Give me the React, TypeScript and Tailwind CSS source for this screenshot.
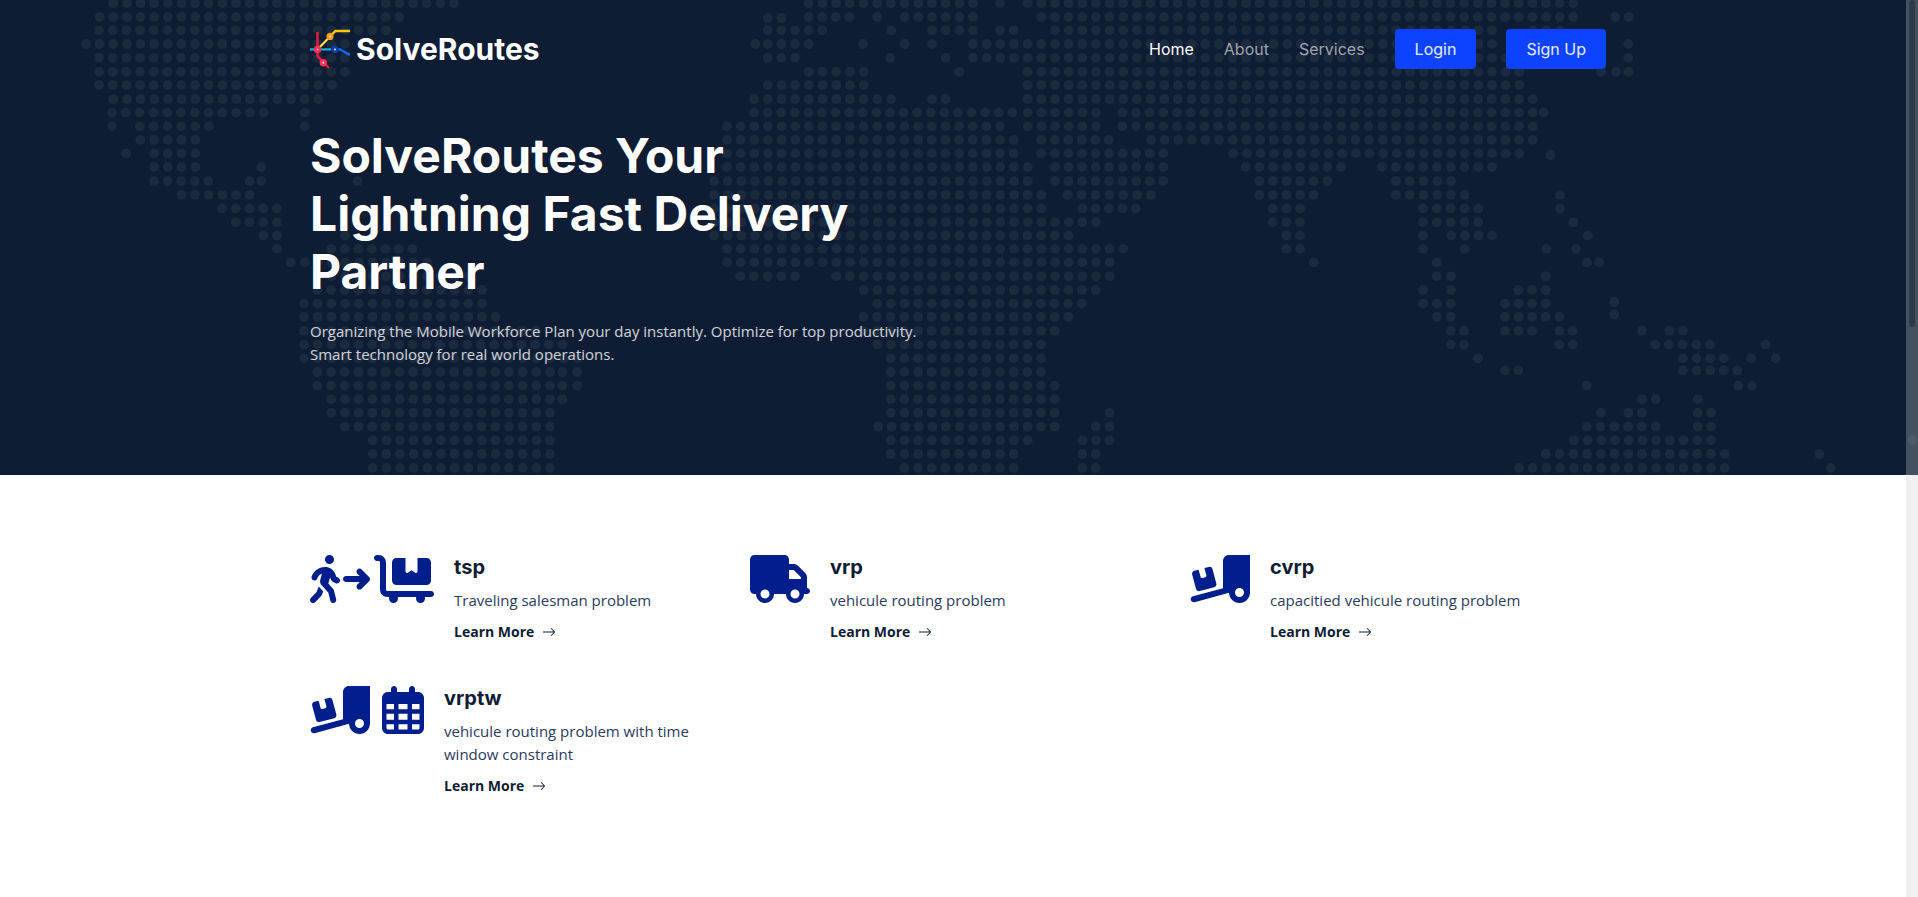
import type { ReactNode } from "react";
import {
  FaCartFlatbed,
  FaPersonWalkingArrowRight,
  FaTruck,
  FaTruckRampBox,
} from "react-icons/fa6";
import { BsArrowRight } from "react-icons/bs";

const PITCH = 13.67;

// Each row of the dotted world map: its y, then [first x, last x] for every run of dots.
type MapRow = [number, ...Array<[number, number]>];

const mapRows: MapRow[] = [
  [3, [113.3, 454], [808.7, 973], [1000, 1000], [1027.7, 1573.3]],
  [17, [99.7, 399.3], [808.7, 849.3], [877.3, 877.3], [904.7, 973], [1041.3, 1573.3], [1615.3, 1628.7]],
  [18, [767.7, 781.3]],
  [30.3, [99, 386], [767.7, 822.3], [891.3, 891.3], [932, 973], [1000, 1013.7], [1055, 1492], [1533, 1560]],
  [44, [86, 345], [755.3, 755.3], [767.7, 808.7], [863, 863], [904.7, 904.7], [932, 932], [973, 1492], [1628.3, 1628.3]],
  [57.8, [99, 345], [767.7, 795], [890, 890], [945.7, 945.7], [973, 1505.7], [1628.3, 1628.3]],
  [71.8, [99, 345], [808.7, 863.7], [959.3, 959.3], [1027.7, 1519.3], [1601, 1601], [1616, 1628.3]],
  [85.2, [99, 332], [767.7, 863.7], [1027.7, 1519.3]],
  [99, [113.3, 318.3], [754, 891], [932, 945.7], [1027.7, 1532.7]],
  [112.6, [112, 263.7], [304.7, 304.7], [754, 1012.3], [1027.7, 1096], [1122.3, 1532.7], [1543.7, 1543.7]],
  [126.4, [112, 112], [139.7, 209], [304.7, 304.7], [727, 1000], [1027.7, 1096], [1122.3, 1532.7]],
  [139.8, [140.3, 195.3], [727, 1013.7], [1041.3, 1108.7], [1151, 1532.7]],
  [153.4, [126.3, 126.3], [154, 195.3], [727, 1013.7], [1041.3, 1163.3], [1233.3, 1519.3]],
  [155, [1550.3, 1550.3]],
  [167, [154, 195.3], [261.3, 261.3], [727, 1027.7], [1055, 1163.3], [1245.7, 1341], [1382, 1492]],
  [181.2, [154, 208.3], [249.7, 261.3], [357.7, 357.7], [714, 1027.7], [1055, 1163.3], [1259.3, 1327.3], [1396, 1451]],
  [194.8, [181.3, 249.7], [714, 1041.3], [1067.7, 1151], [1259.3, 1313.7], [1396, 1464.7], [1560, 1560]],
  [208.5, [222, 277], [714, 1041.3], [1082.3, 1135.7], [1272.7, 1300], [1423, 1478.3], [1560, 1560]],
  [222.2, [235.7, 277], [714, 1096], [1272.7, 1300], [1423, 1478.3], [1573.3, 1573.3]],
  [235.5, [263.3, 277], [345, 345], [714, 1068.3], [1286.3, 1300], [1423, 1423], [1451.3, 1492], [1587.7, 1587.7]],
  [248.9, [277, 277], [331.3, 412.3], [727, 1123.3], [1286.3, 1300], [1423, 1423], [1464.7, 1464.7], [1546.3, 1546.3], [1576, 1576]],
  [262.4, [290.7, 305], [318, 427], [727, 1109.7], [1313.7, 1313.7], [1436.7, 1436.7], [1587, 1599]],
  [276.3, [317.7, 468], [740.3, 795], [836.3, 1109.7], [1436.7, 1451], [1545.7, 1545.7]],
  [290, [317.3, 482], [863.7, 1095.7], [1423, 1423], [1451, 1451], [1518.3, 1545.7]],
  [303.6, [304, 482], [877.3, 1081.7], [1423.3, 1450.7], [1505, 1545.7]],
  [302, [1614.3, 1614.3]],
  [317, [304, 495.7], [863.3, 1068.3], [1437, 1450.7], [1505, 1559.3]],
  [314.5, [1614.3, 1614.3]],
  [330.7, [304, 536], [863.3, 1054.7], [1450.7, 1464], [1505, 1532], [1559.3, 1572.3], [1642, 1642], [1669.3, 1683]],
  [344.6, [304, 562.3], [877.3, 1041], [1450.7, 1464], [1559.3, 1573], [1655.3, 1710], [1765.7, 1765.7]],
  [358.4, [304, 577.3], [890.7, 1041], [1478, 1478], [1683, 1723.7], [1751, 1751], [1775.7, 1775.7]],
  [370.4, [1505, 1518.3], [1683, 1737.3]],
  [372, [317.3, 550], [562.3, 562.3], [577.3, 577.3], [890.7, 1041]],
  [385.6, [317.3, 550], [562.3, 562.3], [577.3, 577.3], [890.7, 1054.7], [1586.7, 1586.7], [1738.3, 1752]],
  [399.2, [331.3, 550], [562.3, 562.3], [890.7, 1054.7], [1642, 1655.7], [1697.7, 1697.7]],
  [412.9, [331.3, 550], [890.7, 1054.7], [1109.7, 1109.7], [1601, 1601], [1628.3, 1642], [1697.7, 1711]],
  [426.5, [344.7, 550], [878, 1054.7], [1095.7, 1109.7], [1586.7, 1655.7], [1697.7, 1711]],
  [440.3, [372.7, 550], [890.7, 1027.7], [1082.3, 1109.7], [1574, 1711], [1913, 1913]],
  [454, [372.7, 550], [890.7, 1013.7], [1082.3, 1095.7], [1545.7, 1724.7], [1819.3, 1819.3]],
  [467.9, [372.7, 550], [904.3, 1013.7], [1082.3, 1095.7], [1519, 1724.7], [1830.7, 1830.7]],
];

function WorldMap() {
  return (
    <svg className="absolute inset-0" width="1918" height="475" viewBox="0 0 1918 475" fill="#1c2a40" aria-hidden="true">
      {mapRows.flatMap(([y, ...runs]) =>
        runs.flatMap(([first, last]) => {
          const steps = Math.round((last - first) / PITCH);
          return Array.from({ length: steps + 1 }, (_, i) => {
            const x = steps === 0 ? first : first + ((last - first) * i) / steps;
            return <circle key={`${x}-${y}`} cx={x} cy={y} r={4.9} />;
          });
        }),
      )}
    </svg>
  );
}

function Logo() {
  return (
    <svg width="40" height="40" viewBox="0 0 40 40" fill="none" strokeWidth="2.2" aria-hidden="true">
      <path d="M0 20.4h21" stroke="#12b5f0" />
      <path d="M28 20.4h2l10 5.6" stroke="#0a6cff" strokeWidth="2.4" />
      <path d="M7.5 3v24.2L19 39" stroke="#f0183f" strokeWidth="2.4" />
      <path d="M7.5 20.5L20 7.5" stroke="#ffe03a" />
      <path d="M20 7.5l5.5-5.5H40" stroke="#ffc800" strokeWidth="2.4" />
      <circle cx="20" cy="7.4" r="2.3" fill="#fff" stroke="#ff9f0f" strokeWidth="2.6" />
      <circle cx="7.5" cy="20.5" r="2.3" fill="#fff" stroke="#ff3355" strokeWidth="3" />
      <circle cx="25" cy="20.4" r="2.3" fill="#fff" stroke="#0c3fa8" strokeWidth="2.8" />
      <circle cx="13.3" cy="33.7" r="2.3" fill="#fff" stroke="#ff3355" strokeWidth="2.8" />
    </svg>
  );
}

function CalendarGrid() {
  return (
    <svg width="42" height="48" viewBox="0 0 448 512" fill="currentColor" aria-hidden="true">
      <path
        fillRule="evenodd"
        d="M128 0c17.700 0 32 14.300 32 32V64H288V32c0-17.700 14.300-32 32-32s32 14.300 32 32V64h32c35.300 0 64 28.700 64 64V448c0 35.300-28.700 64-64 64H64c-35.300 0-64-28.700-64-64V128C0 92.700 28.700 64 64 64H96V32c0-17.700 14.300-32 32-32zM48 192v56h80v-56zM176 192v56h96v-56zM320 192v56h80v-56zM48 296v64h80v-64zM176 296v64h96v-64zM320 296v64h80v-64zM48 408v40c0 8.800 7.200 16 16 16h64v-56zM176 408v56h96v-56zM320 408v56h64c8.800 0 16-7.200 16-16v-40z"
      />
    </svg>
  );
}

function Header() {
  return (
    <header className="relative flex h-[98px] items-center justify-between">
      <a className="flex items-center gap-[6px]" href="#">
        <Logo />
        <span className="font-['Inter',sans-serif] text-[30px] leading-none font-bold text-white">SolveRoutes</span>
      </a>
      <nav className="flex items-center gap-[30px] font-['Inter',sans-serif] text-base text-white/60">
        <a className="text-white" href="#">Home</a>
        <a href="#">About</a>
        <a href="#">Services</a>
        <a className="flex h-10 items-center rounded bg-[#0d42ff] px-5 text-white/90" href="#">Login</a>
        <a className="flex h-10 items-center rounded bg-[#0d42ff] px-5 text-white/90" href="#">Sign Up</a>
      </nav>
    </header>
  );
}

interface ServiceProps {
  icons: ReactNode;
  title: string;
  text: string;
}

function Service({ icons, title, text }: ServiceProps) {
  return (
    <article className="flex w-[440px] items-start gap-5 pr-6">
      <div className="flex shrink-0 text-5xl text-[#001f8d]">{icons}</div>
      <div className="text-[#0e1d34]">
        <h4 className="font-['Inter',sans-serif] text-xl leading-6 font-bold">{title}</h4>
        <p className="mt-[10px] text-[15px] leading-[23px] text-[#2a3b5c]">{text}</p>
        <a className="mt-[9px] flex items-center gap-2 text-sm leading-[21px] font-bold" href="#">
          Learn More <BsArrowRight />
        </a>
      </div>
    </article>
  );
}

const wide = "h-12 w-[60px]";

export default function App() {
  return (
    <div className="relative h-[897px] w-[1918px] overflow-hidden bg-white font-['Open_Sans',sans-serif]">
      <section className="relative h-[475px] bg-[#0e1d34]">
        <WorldMap />
        <div className="relative ml-[310px] w-[1296px]">
          <Header />
          <h1 className="mt-[29px] w-[640px] font-['Inter',sans-serif] text-5xl leading-[58px] font-bold text-white">
            SolveRoutes Your Lightning Fast Delivery Partner
          </h1>
          <p className="mt-[19px] w-[640px] text-[15px] leading-[23px] text-white/80">
            Organizing the Mobile Workforce Plan your day instantly. Optimize for top productivity. Smart technology for
            real world operations.
          </p>
        </div>
      </section>
      <main className="ml-[310px] flex w-[1330px] flex-wrap gap-y-11 pt-20">
        <Service
          title="tsp"
          text="Traveling salesman problem"
          icons={
            <div className="flex gap-1">
              <FaPersonWalkingArrowRight className={wide} />
              <FaCartFlatbed className={wide} />
            </div>
          }
        />
        <Service title="vrp" text="vehicule routing problem" icons={<FaTruck className={wide} />} />
        <Service title="cvrp" text="capacitied vehicule routing problem" icons={<FaTruckRampBox className={wide} />} />
        <Service
          title="vrptw"
          text="vehicule routing problem with time window constraint"
          icons={
            <div className="flex gap-3">
              <FaTruckRampBox className={wide} />
              <CalendarGrid />
            </div>
          }
        />
      </main>
      <div className="absolute top-0 right-0 flex h-full w-3 flex-col">
        <div className="h-[475px] bg-[#465160]" />
        <div className="grow bg-[#f0f0f0]" />
        <div className="absolute top-0 left-[3px] h-[327px] w-[6px] rounded-full bg-[#2e3a4a]" />
        <div className="absolute top-[435px] left-[2px] size-[10px] rounded-full bg-white/5" />
      </div>
    </div>
  );
}
